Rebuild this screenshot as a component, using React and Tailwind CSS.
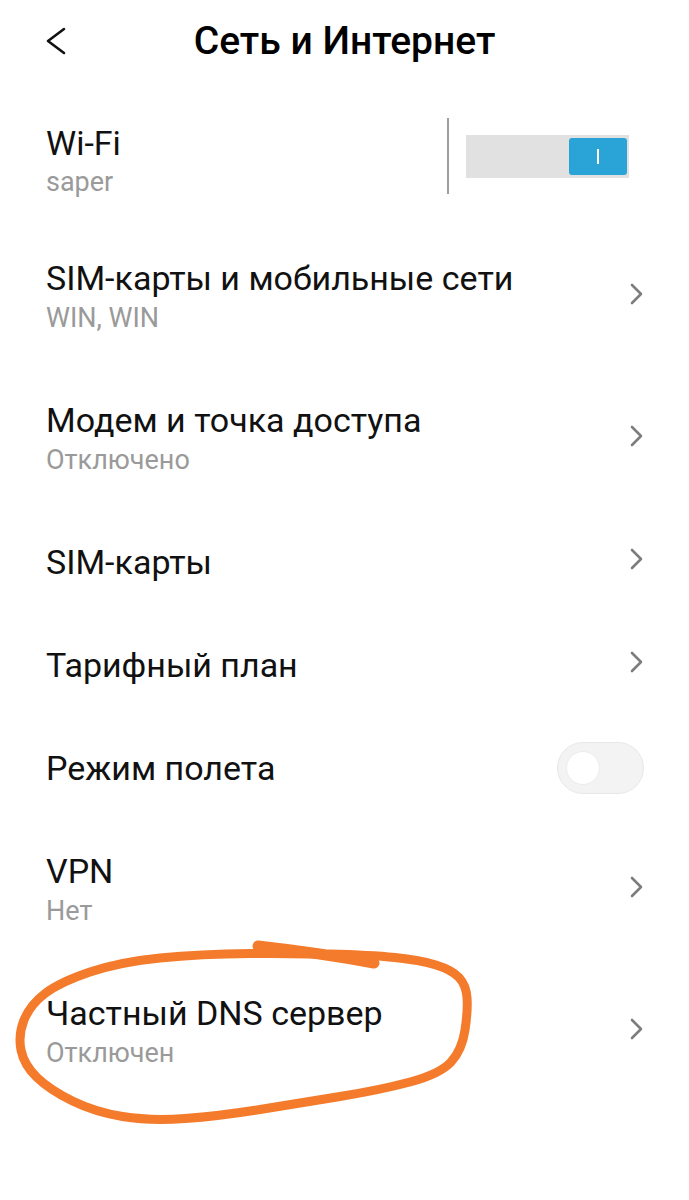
import React from 'react';

const font = { fontFamily: 'Roboto, "Noto Sans", sans-serif' };

function Chevron() {
  return (
    <svg width="13" height="22" viewBox="0 0 13 22" className="shrink-0 -mt-[6px]">
      <polyline points="2,2 11,11 2,20" fill="none" stroke="#7d7d7d" strokeWidth="2.6" strokeLinecap="round" strokeLinejoin="round" />
    </svg>
  );
}

function NavRow({ title, sub, height }) {
  return (
    <div className={`flex items-center justify-between pl-[46px] pr-[46px] ${height}`}>
      <div className="flex flex-col">
        <span className="text-[34px] leading-[40px] text-[#111]">{title}</span>
        {sub && <span className="text-[27px] leading-[36px] mt-[2px] text-[#9a9a9a]">{sub}</span>}
      </div>
      <Chevron />
    </div>
  );
}

export default function App() {
  return (
    <div className="relative w-[689px] h-[1200px] bg-white overflow-hidden" style={font}>
      {/* Header */}
      <div className="grid grid-cols-[40px_1fr_40px] items-center px-[46px] h-[96px] pb-[14px]">
        <svg width="20" height="28" viewBox="0 0 20 28">
          <polyline points="18,2 2,14 18,26" fill="none" stroke="#111" strokeWidth="2.6" strokeLinecap="round" strokeLinejoin="round" />
        </svg>
        <h1 className="text-center text-[39px] font-medium text-black leading-none">Сеть и Интернет</h1>
        <div />
      </div>

      {/* Wi-Fi */}
      <div className="flex items-center justify-between pl-[46px] pr-[60px] h-[130px]">
        <div className="flex flex-col">
          <span className="text-[34px] leading-[40px] text-[#111]">Wi-Fi</span>
          <span className="text-[27px] leading-[36px] mt-[1px] text-[#9a9a9a]">saper</span>
        </div>
        <div className="flex items-center gap-[17px] -mt-[10px]">
          <div className="w-[2px] h-[76px] bg-[#9e9e9e]" />
          <div className="flex items-center justify-end w-[163px] h-[43px] bg-[#e1e1e1] pr-[2px]">
            <div className="flex items-center justify-center w-[58px] h-[37px] rounded-[3px] bg-[#2aa3d6]">
              <div className="w-[2px] h-[15px] bg-white" />
            </div>
          </div>
        </div>
      </div>

      <NavRow title="SIM-карты и мобильные сети" sub="WIN, WIN" height="h-[142px]" />
      <NavRow title="Модем и точка доступа" sub="Отключено" height="h-[142px]" />
      <NavRow title="SIM-карты" height="h-[103px]" />
      <NavRow title="Тарифный план" height="h-[103px]" />

      {/* Airplane mode */}
      <div className="flex items-center justify-between pl-[46px] pr-[45px] h-[103px]">
        <span className="text-[34px] leading-[40px] text-[#111]">Режим полета</span>
        <div className="flex items-center w-[87px] h-[52px] rounded-full bg-[#f3f3f3] border border-[#e8e8e8] pl-[8px]">
          <div className="w-[34px] h-[34px] rounded-full bg-white border border-[#ececec]" />
        </div>
      </div>

      <NavRow title="VPN" sub="Нет" height="h-[142px]" />
      <NavRow title="Частный DNS сервер" sub="Отключен" height="h-[142px]" />

      {/* hand-drawn highlight */}
      <svg className="absolute left-0 top-0 pointer-events-none" width="689" height="1200" viewBox="0 0 689 1200">
        <g fill="none" stroke="#f47b2c" strokeLinecap="round" strokeLinejoin="round">
          <path
            strokeWidth="9"
            d="M350 955 Q300 953 250 953.5 Q200 954 160 958 Q120 962 90 972 Q60 982 45 993.5 Q30 1005 24 1020 Q18 1035 21 1050 Q24 1065 37 1077.5 Q50 1090 72.5 1101 Q95 1112 122.5 1116.5 Q150 1121 185 1118.5 Q220 1116 260 1109.5 Q300 1103 340 1096.5 Q380 1090 410 1082 Q440 1074 451 1062 Q462 1050 465 1030 Q468 1010 467 997.5 Q466 985 459 977.5 Q452 970 436 965 Q420 960 395 957.5 Q370 955 330 954"
          />
          <path strokeWidth="11" d="M258 946 Q320 953 374 963" />
        </g>
      </svg>
    </div>
  );
}
